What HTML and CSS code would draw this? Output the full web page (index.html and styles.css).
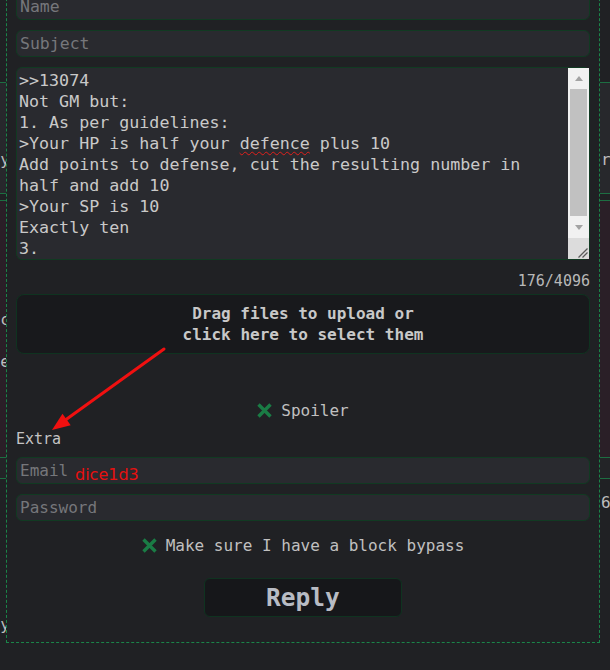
FILE: index.html
```html
<!DOCTYPE html>
<html lang="en">
<head>
<meta charset="utf-8">
<title>Reply</title>
<link rel="stylesheet" href="styles.css">
</head>
<body>
<div class="thread">
  <div class="band band-top"></div>
  <div class="band band-op">
    <div class="frag-row frag-op"><span class="frag-l"><span>y</span></span><span></span><span class="frag-r">r</span></div>
  </div>
  <div class="band band-gap"></div>
  <div class="band band-hl">
    <div class="frag-row frag-c"><span class="frag-l"><span>c</span></span><span></span><span class="frag-r"></span></div>
    <div class="frag-row frag-e"><span class="frag-l"><span>e</span></span><span></span><span class="frag-r"></span></div>
  </div>
  <div class="band band-gap2"></div>
  <div class="band band-low">
    <div class="frag-row frag-69"><span class="frag-l"></span><span></span><span class="frag-r">69</span></div>
    <div class="frag-row frag-y"><span class="frag-l"><span>y</span></span><span></span><span class="frag-r"></span></div>
  </div>
</div>

<form class="reply">
  <input class="field" type="text" placeholder="Name">
  <input class="field field-gap" type="text" placeholder="Subject">
  <div class="msg">
    <div class="msg-text">&gt;&gt;13074
Not GM but:
1. As per guidelines:
&gt;Your HP is half your <span class="typo">defence</span> plus 10
Add points to defense, cut the resulting number in half and add 10
&gt;Your SP is 10
Exactly ten
3.</div>
    <div class="sb">
      <div class="sb-btn sb-up"></div>
      <div class="sb-track"><div class="sb-thumb"></div></div>
      <div class="sb-btn sb-down"></div>
      <div class="sb-grip">
        <svg width="21" height="21" viewBox="0 0 21 21"><path d="M19.5 10.5 L10.5 19.5 M19.5 14.5 L14.5 19.5" stroke="#5a5a5a" stroke-width="1.3" fill="none"/></svg>
      </div>
    </div>
  </div>
  <div class="counter">176/4096</div>
  <div class="drop">Drag files to upload or<br>click here to select them</div>
  <label class="check check-spoiler">
    <svg class="xicon" width="15" height="15" viewBox="0 0 15 15"><path d="M1.5 1.5 L13.5 13.5 M13.5 1.5 L1.5 13.5" stroke="#1a7c45" stroke-width="3.4" fill="none"/></svg>
    <span>Spoiler</span>
  </label>
  <div class="extra">Extra</div>
  <input class="field field-email" type="text" placeholder="Email">
  <input class="field field-gap" type="password" placeholder="Password">
  <label class="check check-bypass">
    <svg class="xicon" width="15" height="15" viewBox="0 0 15 15"><path d="M1.5 1.5 L13.5 13.5 M13.5 1.5 L1.5 13.5" stroke="#1a7c45" stroke-width="3.4" fill="none"/></svg>
    <span>Make sure I have a block bypass</span>
  </label>
  <button class="submit" type="button">Reply</button>
</form>

<svg class="annot-arrow" width="610" height="670" viewBox="0 0 610 670">
  <line x1="164" y1="349" x2="64" y2="421" stroke="#f01010" stroke-width="3" stroke-linecap="round"/>
  <polygon points="52,430 62.5,413.8 70.7,425.2" fill="#f01010"/>
</svg>
<span class="annot-name">dice1d3</span>
</body>
</html>
```
FILE: styles.css
```css
* { box-sizing: border-box; }
html, body { margin: 0; height: 100%; }
body {
  background: #202124;
  overflow: hidden;
  position: relative;
  font-family: "DejaVu Sans Mono", monospace;
  color: #c8c8c8;
}

/* background thread peeking at the edges */
.thread { display: flex; flex-direction: column; height: 670px; }
.band { flex: none; }
.band-top { height: 82px; }
.band-op {
  height: 112px;
  border-top: 1px solid #1d6e42;
  border-bottom: 1px solid #1d6e42;
  background: #27282c;
  padding-top: 67px;
}
.band-gap { height: 6px; }
.band-hl {
  height: 258px;
  border-top: 1px solid #1d6e42;
  border-bottom: 1px solid #1d6e42;
  background: #2a1f27;
  padding-top: 109px;
}
.band-gap2 { height: 20px; background: #232427; }
.band-low { flex: 1; border-top: 1px solid #1d6e42; padding-top: 14px; }

.frag-row {
  display: grid;
  grid-template-columns: 6px 1fr 10px;
  font-size: 16px;
  line-height: 20px;
  height: 20px;
  color: #bdbdbd;
}
.frag-l { display: flex; justify-content: flex-end; }
.frag-l span { margin-right: -4px; }
.frag-r { padding-left: 1px; white-space: nowrap; overflow: hidden; }
.frag-e { margin-top: 22px; }
.frag-y { margin-top: 102px; }

/* reply form */
.reply {
  position: absolute;
  left: 6px;
  top: -42px;
  width: 594px;
  border: 1px dashed #1a8549;
  background: #202124;
  padding: 34px 9px 25px;
  display: flex;
  flex-direction: column;
  margin: 0;
}
.field {
  display: block;
  width: 100%;
  height: 27px;
  margin: 0;
  border: 1px solid #113a22;
  border-radius: 6px;
  background: #292a2f;
  font-family: "DejaVu Sans Mono", monospace;
  font-size: 16.5px;
  color: #c9c9c9;
  padding: 0 3px;
  outline: none;
}
.field::placeholder { color: #76777b; }
.field-gap { margin-top: 10px; }
.field-email { margin-top: 9px; font-size: 16px; }
.field-email + .field { font-size: 16px; }

.msg {
  margin-top: 10px;
  height: 193px;
  border: 1px solid #113a22;
  border-radius: 6px;
  background: #292a2f;
  display: flex;
}
.msg-text {
  flex: 1;
  min-width: 0;
  padding: 2px 0 0 2px;
  font-size: 16.66px;
  line-height: 21px;
  white-space: pre-wrap;
  overflow: hidden;
  color: #c9c9c9;
}
.typo {
  text-decoration: underline wavy #e0201c;
  text-decoration-skip-ink: none;
  text-underline-offset: 2px;
  text-decoration-thickness: 1px;
}
.sb {
  width: 21px;
  flex: none;
  display: flex;
  flex-direction: column;
  background: #f1f1f1;
}
.sb-btn { display: flex; align-items: center; justify-content: center; }
.sb-up { height: 20px; }
.sb-down { height: 21px; }
.sb-up::before {
  content: "";
  border-left: 4.5px solid transparent;
  border-right: 4.5px solid transparent;
  border-bottom: 5px solid #a3a3a3;
}
.sb-down::before {
  content: "";
  border-left: 4.5px solid transparent;
  border-right: 4.5px solid transparent;
  border-top: 5px solid #a3a3a3;
}
.sb-track { height: 129px; padding: 1px 2px; }
.sb-thumb { height: 127px; background: #c1c1c1; }
.sb-grip { height: 21px; background: #dcdcdc; }
.sb-grip svg { display: block; }

.counter {
  text-align: right;
  font-size: 15px;
  line-height: 18px;
  padding: 12px 0 4px;
  color: #b8b8b8;
}
.drop {
  height: 60px;
  border: 1px solid #0f3320;
  border-radius: 8px;
  background: #18191c;
  display: flex;
  align-items: center;
  justify-content: center;
  text-align: center;
  font-weight: bold;
  font-size: 16px;
  line-height: 21px;
  color: #c8c8c8;
}
.check {
  display: flex;
  align-items: center;
  justify-content: center;
  gap: 9px;
  height: 20px;
  font-size: 16px;
  color: #c0c0c0;
}
.xicon { display: block; flex: none; }
.check-spoiler { margin-top: 46px; }
.check-bypass { margin-top: 14px; }
.extra {
  margin-top: 10px;
  font-size: 15px;
  line-height: 18px;
  color: #c4c4c4;
}
.submit {
  align-self: center;
  width: 198px;
  height: 39px;
  margin-top: 23px;
  border: 1px solid #0f3320;
  border-radius: 6px;
  background: #16171a;
  color: #b8bcc4;
  font-family: "DejaVu Sans Mono", monospace;
  font-weight: bold;
  font-size: 24.5px;
  padding: 0;
}

/* annotations drawn over the screenshot */
.annot-arrow { position: absolute; left: 0; top: 0; pointer-events: none; }
.annot-name {
  position: absolute;
  left: 75px;
  top: 467px;
  font-family: "DejaVu Sans", sans-serif;
  font-size: 16px;
  line-height: 16px;
  color: #e8100f;
}
```
